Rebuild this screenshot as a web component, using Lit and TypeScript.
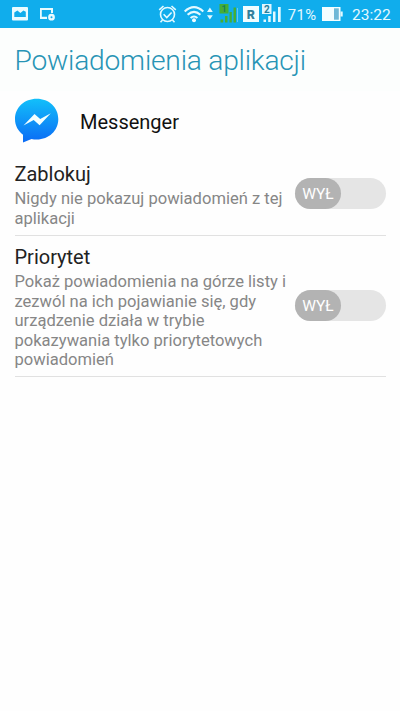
import { LitElement, html, css } from "lit";
import { customElement, property } from "lit/decorators.js";

@customElement("status-bar")
class StatusBar extends LitElement {
  static styles = css`
    :host { display: block; height: 28px; background: #10adec; }
    svg { display: block; }
    text { font-family: Roboto, sans-serif; }
  `;
  render() {
    return html`<svg width="400" height="28" viewBox="0 0 400 28">
      <g fill="#e9fbff">
        <path fill-rule="evenodd" d="M13 7h14q1 0 1 1v11.500q0 1-1 1H13q-1 0-1-1V8q0-1 1-1zM14.300 17h11.500v-5.300l-2.400-1.200-3 2.500-3-2.500-3.100 2z"/>
        <path fill-rule="evenodd" d="M40 8h13v5h-2v-3h-9.200v6.800h5.200v2.200H40z"/>
        <path fill-rule="evenodd" d="M51.500 13.800a3.400 3.400 0 1 1 0 6.800 3.400 3.400 0 0 1 0-6.800zm0 2.400a1 1 0 1 0 0 2 1 1 0 0 0 0-2z"/>
      </g>
      <g fill="none" stroke="#e4f9ff" stroke-width="1.600">
        <circle cx="167.500" cy="14.500" r="7"/>
        <path d="M159.200 9.800l4.300-3.800M175.800 9.800l-4.300-3.800M163.600 14.300l3.200 3.200 4.800-5M162.500 20l-2 2.200M172.500 20l2 2.200"/>
      </g>
      <g fill="none" stroke="#e4f9ff" stroke-width="2.100">
        <path d="M184.700 11.400Q194 2.800 203.300 11.400M187.600 14.800Q194 8.900 200.400 14.800M190.600 18Q194 15 197.400 18"/>
      </g>
      <circle cx="194" cy="20.300" r="2" fill="#f2fdff"/>
      <path d="M207 12l2.900-4.400 2.900 4.400zM207 15.200h5.800l-2.900 4.300z" fill="#e4f9ff"/>
      <g fill="#45ae35">
        <path d="M219.500 4h9v9.500h-9zM220.500 19.500h2.700V22.500h-2.700zM225 16h2.500v6.500H225zM229.500 12h2.300v10.500h-2.300zM233.500 7.500h2.500v15h-2.500z"/>
      </g>
      <text x="221.600" y="12" font-size="9" font-weight="700" fill="#187f56">1</text>
      <path d="M237.500 8v14" stroke="#65c9ef" stroke-width="1"/>
      <rect x="243" y="6" width="16" height="16" fill="#f1fdff"/>
      <text x="246.800" y="18.500" font-size="12.500" font-weight="900" fill="#327f9b">R</text>
      <rect x="262" y="4" width="9.500" height="10" fill="#dff6ff"/>
      <text x="264" y="12.500" font-size="10" font-weight="700" fill="#287f9c">2</text>
      <path d="M263.500 19.500h2.500V22h-2.500zM268.200 16h2.500v6h-2.500zM273 11.500h2.500V22H273zM278 7h2.700v15H278z" fill="#e4f9ff"/>
      <text x="287.700" y="20" font-size="14.800" textLength="28.500" fill="#e4f9ff">71%</text>
      <rect x="322" y="7" width="18.500" height="14" fill="#f4feff"/>
      <rect x="334" y="8.300" width="4.800" height="11.400" fill="#70b9d7"/>
      <path d="M340.500 11.500h2.200v5h-2.200z" fill="#e4f9ff"/>
      <text x="352" y="20" font-size="15.500" textLength="38.600" fill="#e4f9ff">23:22</text>
    </svg>`;
  }
}

@customElement("setting-row")
class SettingRow extends LitElement {
  @property() heading = "";
  @property({ type: Array }) lines: string[] = [];
  static styles = css`
    :host { display: flex; align-items: center; justify-content: space-between; box-sizing: border-box;
      margin: 0 14px 0 14.5px; border-bottom: 1px solid #e1e1e1; white-space: nowrap; }
    .text { padding-top: 3px; }
    .heading { font-size: 20px; line-height: 24px; color: #222; padding-bottom: 3px; }
    .desc { font-size: 16.560px; line-height: 19.4px; color: #868686; }
    .toggle { width: 91px; height: 31px; border-radius: 16px; background: #e5e5e5; flex: none; margin-bottom: 0.8px; }
    .knob { width: 46px; height: 31px; border-radius: 16px; background: #b3b3b3; color: #fff;
      font-size: 15.500px; line-height: 32px; text-align: center; }
  `;
  render() {
    return html`<div class="text">
        <div class="heading">${this.heading}</div>
        <div class="desc">${this.lines.map((l) => html`<div>${l}</div>`)}</div>
      </div>
      <div class="toggle"><div class="knob">WYŁ</div></div>`;
  }
}

@customElement("app-root")
class AppRoot extends LitElement {
  static styles = css`
    :host { display: block; width: 400px; height: 711px; background: #fefefe; overflow: hidden;
      font-family: Roboto, sans-serif; }
    .title { height: 63px; line-height: 65px; padding-left: 14.5px; box-sizing: border-box;
      font-size: 28.200px; letter-spacing: -0.22px; font-weight: 300; color: #2794b5; background: #fcfefd; white-space: nowrap; }
    .app { display: flex; align-items: center; height: 61px; padding-left: 14px; gap: 21px; font-size: 20px; color: #111; }
    .app svg { margin-bottom: 2px; }
    .first { height: 84px; }
    .second { height: 141px; }
  `;
  render() {
    return html`<status-bar></status-bar>
      <div class="title">Powiadomienia aplikacji</div>
      <div class="app">
        <svg width="45" height="45" viewBox="0 0 45 45">
          <defs><linearGradient id="g" x1="0" y1="0" x2="0" y2="1">
            <stop offset="0" stop-color="#12c0fa"/><stop offset="1" stop-color="#0b6bf5"/>
          </linearGradient></defs>
          <path fill="url(#g)" d="M22.700.700C35 .700 44.300 9.400 44.300 21S35 41.500 22.700 41.500q-2.800 0-5.200-.600L9 44.400V36.700C4 33 1 27.500 1 21 1 9.400 10.500.700 22.700.700z"/>
          <path fill="#f3ffff" d="M9.500 27.500L20.500 15.900l5.700 5L36.800 15.300 25.600 27.200l-5.900-5.100z"/>
        </svg>
        <span>Messenger</span>
      </div>
      <setting-row class="first" heading="Zablokuj" .lines=${["Nigdy nie pokazuj powiadomień z tej", "aplikacji"]}></setting-row>
      <setting-row class="second" heading="Priorytet" .lines=${["Pokaż powiadomienia na górze listy i", "zezwól na ich pojawianie się, gdy", "urządzenie działa w trybie", "pokazywania tylko priorytetowych", "powiadomień"]}></setting-row>`;
  }
}
